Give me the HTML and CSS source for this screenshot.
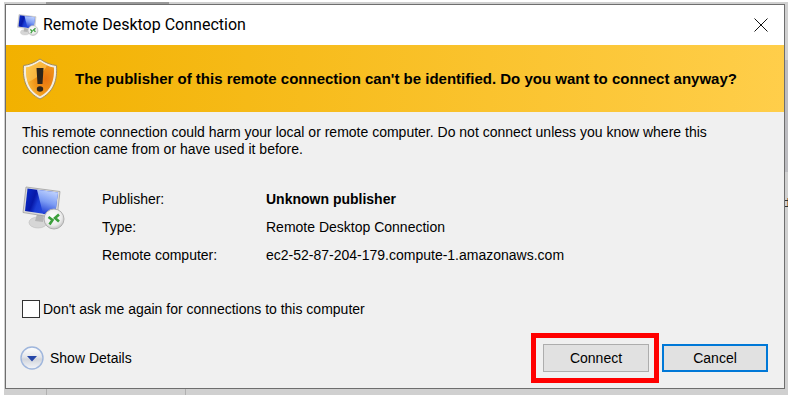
FILE: index.html
```
<!DOCTYPE html>
<html lang="en">
<head>
  <meta charset="UTF-8">
  <meta name="viewport" content="width=device-width, initial-scale=1.0">
  <title>Remote Desktop Connection</title>
  <link rel="stylesheet" href="styles.css">
</head>
<body>
  <!-- Shared computer icon -->
  <svg class="symbols" aria-hidden="true">
    <defs>
      <linearGradient id="screen" x1="0" y1="0" x2="1" y2="0.3">
        <stop offset="0" stop-color="#0a2fd0"/>
        <stop offset="0.35" stop-color="#0618a8"/>
        <stop offset="0.5" stop-color="#1c3fd6"/>
        <stop offset="1" stop-color="#2c50e0"/>
      </linearGradient>
      <linearGradient id="glare" x1="0.7" y1="0" x2="0.4" y2="1">
        <stop offset="0" stop-color="#c4d6ff"/>
        <stop offset="0.5" stop-color="#7c9cf4"/>
        <stop offset="1" stop-color="#1634d0"/>
      </linearGradient>
      <radialGradient id="badge" cx="0.45" cy="0.4" r="0.6">
        <stop offset="0" stop-color="#ffffff"/>
        <stop offset="0.7" stop-color="#ececec"/>
        <stop offset="1" stop-color="#c4c4c4"/>
      </radialGradient>
    </defs>
    <symbol id="computer" viewBox="0 0 44 44">
      <ellipse cx="16" cy="36.500" rx="9" ry="5.500" fill="#d6d6d6" stroke="#bcbcbc" stroke-width="0.600"/>
      <path d="M15 28 L22 29 L21 36 L13 35 Z" fill="#b5b5b5"/>
      <path d="M4 1 L38 5.500 L35 32 L1 26.500 Z" fill="#d9d9d9" stroke="#a0a0a0" stroke-width="0.800"/>
      <path d="M5.500 2.500 L36 6.500 L33 29.500 L3 25 Z" fill="url(#screen)"/>
      <path d="M15 3.800 L36 6.500 L33 29.500 L21 27.700 Z" fill="url(#glare)"/>
      <circle cx="32" cy="33" r="10" fill="url(#badge)" stroke="#b0b0b0"/>
      <path d="M26.500 31 L30.500 34 L27.500 38.500" fill="none" stroke="#3c9f3c" stroke-width="2.600"/>
      <path d="M37 28.500 L33 32 L37 35.500" fill="none" stroke="#3c9f3c" stroke-width="2.600"/>
    </symbol>
  </svg>

  <main class="desktop">
    <section class="dialog" role="dialog" aria-labelledby="dialog-title">
      <header class="title-bar">
        <svg class="title-icon" aria-hidden="true"><use href="#computer"/></svg>
        <h1 id="dialog-title">Remote Desktop Connection</h1>
        <button class="close" type="button" aria-label="Close">
          <svg viewBox="0 0 14 14"><path d="M0.500 0.500 L13.500 13.500 M13.500 0.500 L0.500 13.500"/></svg>
        </button>
      </header>

      <div class="banner">
        <svg class="shield" viewBox="0 0 36 42" aria-hidden="true">
          <defs>
            <radialGradient id="shield-fill" cx="0.7" cy="0.5" r="0.7">
              <stop offset="0" stop-color="#e87410"/>
              <stop offset="0.55" stop-color="#f09418"/>
              <stop offset="1" stop-color="#f9bc3c"/>
            </radialGradient>
          </defs>
          <path d="M18 1 C13 4.500 7 7 1.500 7.500 C0.500 22 4 34 18 41 C32 34 35.500 22 34.500 7.500 C29 7 23 4.500 18 1 Z" fill="#f4eee0" stroke="#a08c60"/>
          <path d="M18 3.500 C13.500 6.500 9 8.800 4 9.500 C3.500 22 6.500 32.500 18 38.500 C29.500 32.500 32.500 22 32 9.500 C27 8.800 22.500 6.500 18 3.500 Z" fill="url(#shield-fill)"/>
          <path d="M18 3.500 C13.500 6.500 9 8.800 4 9.500 C3.800 15 4.500 20 6 24 C14 21 22 14 25 7.500 C22.500 6.600 20 5 18 3.500 Z" fill="#ffcb58" opacity="0.600"/>
          <path d="M14.500 10 H21.500 L20.500 26 H15.500 Z" fill="#2d241a"/>
          <ellipse cx="18" cy="31" rx="3.200" ry="2.800" fill="#2d241a"/>
        </svg>
        <h2>The publisher of this remote connection can't be identified. Do you want to connect anyway?</h2>
      </div>

      <form class="content">
        <p class="warning">This remote connection could harm your local or remote computer. Do not connect unless you know where this connection came from or have used it before.</p>

        <div class="connection">
          <svg class="connection-icon" aria-hidden="true"><use href="#computer"/></svg>
          <dl>
            <dt>Publisher:</dt>
            <dd><strong>Unknown publisher</strong></dd>
            <dt>Type:</dt>
            <dd>Remote Desktop Connection</dd>
            <dt>Remote computer:</dt>
            <dd>ec2-52-87-204-179.compute-1.amazonaws.com</dd>
          </dl>
        </div>

        <div class="remember">
          <input type="checkbox" id="remember">
          <label for="remember">Don't ask me again for connections to this computer</label>
        </div>

        <footer class="actions">
          <button class="details" type="button">
            <svg viewBox="0 0 24 24" aria-hidden="true">
              <defs>
                <linearGradient id="knob" x1="0" y1="0" x2="0" y2="1">
                  <stop offset="0" stop-color="#ffffff"/>
                  <stop offset="0.45" stop-color="#e4e6ea"/>
                  <stop offset="0.55" stop-color="#d2d5dc"/>
                  <stop offset="1" stop-color="#f4f6fa"/>
                </linearGradient>
              </defs>
              <circle cx="12" cy="12" r="11" fill="url(#knob)" stroke="#9fb6dc" stroke-width="1.400"/>
              <path d="M7 10 H17 L12 15.500 Z" fill="#2546a8"/>
            </svg>
            Show Details
          </button>
          <div class="highlight">
            <button class="push" type="button">Connect</button>
          </div>
          <button class="push default" type="button">Cancel</button>
        </footer>
      </form>
    </section>
  </main>
</body>
</html>
```
FILE: styles.css
```
* {
  box-sizing: border-box;
}

body {
  margin: 0;
  padding: 2px 4px 0;
  background: #fff;
  color: #000;
  font: 14px/18px "Liberation Sans", Arial, sans-serif;
}

h1, h2, p, dl, dd {
  margin: 0;
}

.symbols {
  position: absolute;
  width: 0;
  height: 0;
}

/* Slice of the window behind the dialog */
.desktop {
  padding: 2px 3px 6px 1px;
  background:
    linear-gradient(#999, #999) 42px 0 / 123px 2px no-repeat,
    linear-gradient(#333, #333) 100% 198px / 3px 1px no-repeat,
    linear-gradient(#333, #333) 100% 204px / 3px 1px no-repeat,
    linear-gradient(#b98a58, #b98a58) 100% 196px / 1px 8px no-repeat,
    linear-gradient(#bcbcc0, #bcbcc0) 100% 58px / 3px 112px no-repeat,
    linear-gradient(#b0b0b0, #b0b0b0) 42px 100% / 1px 6px no-repeat,
    linear-gradient(#b0b0b0, #b0b0b0) 181px 100% / 1px 6px no-repeat,
    #d0d0d0;
}

.dialog {
  border: 1px solid #6e6e6e;
  background: #f0f0f0;
}

/* Title bar */
.title-bar {
  display: flex;
  align-items: center;
  height: 40px;
  padding: 0 16px 0 11px;
  background: #fff;
}

.title-icon {
  width: 22px;
  height: 22px;
  margin-right: 4px;
}

h1 {
  flex: 1;
  font: 16px/24px Roboto, "Segoe UI", sans-serif;
}

.close {
  display: flex;
  padding: 0;
  border: 0;
  background: none;
}

.close svg {
  width: 14px;
  height: 14px;
  fill: none;
  stroke: #111;
}

/* Warning banner */
.banner {
  display: flex;
  align-items: center;
  gap: 17px;
  height: 67px;
  padding: 0 16px;
  background: linear-gradient(to right, #f2b100, #ffce4a);
}

.shield {
  flex: none;
  width: 36px;
  height: 42px;
}

h2 {
  font-size: 15px;
  line-height: 20px;
}

/* Dialog content */
.content {
  padding: 12px 16px 5px;
}

.warning {
  max-width: 710px;
  line-height: 17px;
}

.connection {
  display: flex;
  align-items: center;
  gap: 36px;
  margin-top: 28px;
}

.connection-icon {
  align-self: flex-start;
  width: 44px;
  height: 44px;
}

dl {
  display: grid;
  grid-template-columns: 164px 1fr;
  row-gap: 10px;
  padding-top: 4px;
}

.remember {
  display: flex;
  align-items: center;
  gap: 3px;
  margin-top: 36px;
}

.remember input {
  appearance: none;
  width: 18px;
  height: 18px;
  margin: 0;
  border: 1px solid #333;
  background: #fff;
}

.actions {
  display: flex;
  align-items: center;
  margin-top: 15px;
}

.details {
  display: flex;
  align-items: center;
  gap: 6px;
  margin: 0 auto 0 -2px;
  padding: 0;
  border: 0;
  background: none;
  color: inherit;
  font: inherit;
}

.details svg {
  width: 24px;
  height: 24px;
}

.highlight {
  margin-right: 3px;
  padding: 6px 5px 6px 7px;
  border: 5px solid #f00;
}

.push {
  display: block;
  width: 106px;
  height: 28px;
  padding: 0;
  border: 1px solid #adadad;
  background: #e1e1e1;
  color: inherit;
  font: inherit;
}

.push.default {
  border: 2px solid #0078d7;
}
```
